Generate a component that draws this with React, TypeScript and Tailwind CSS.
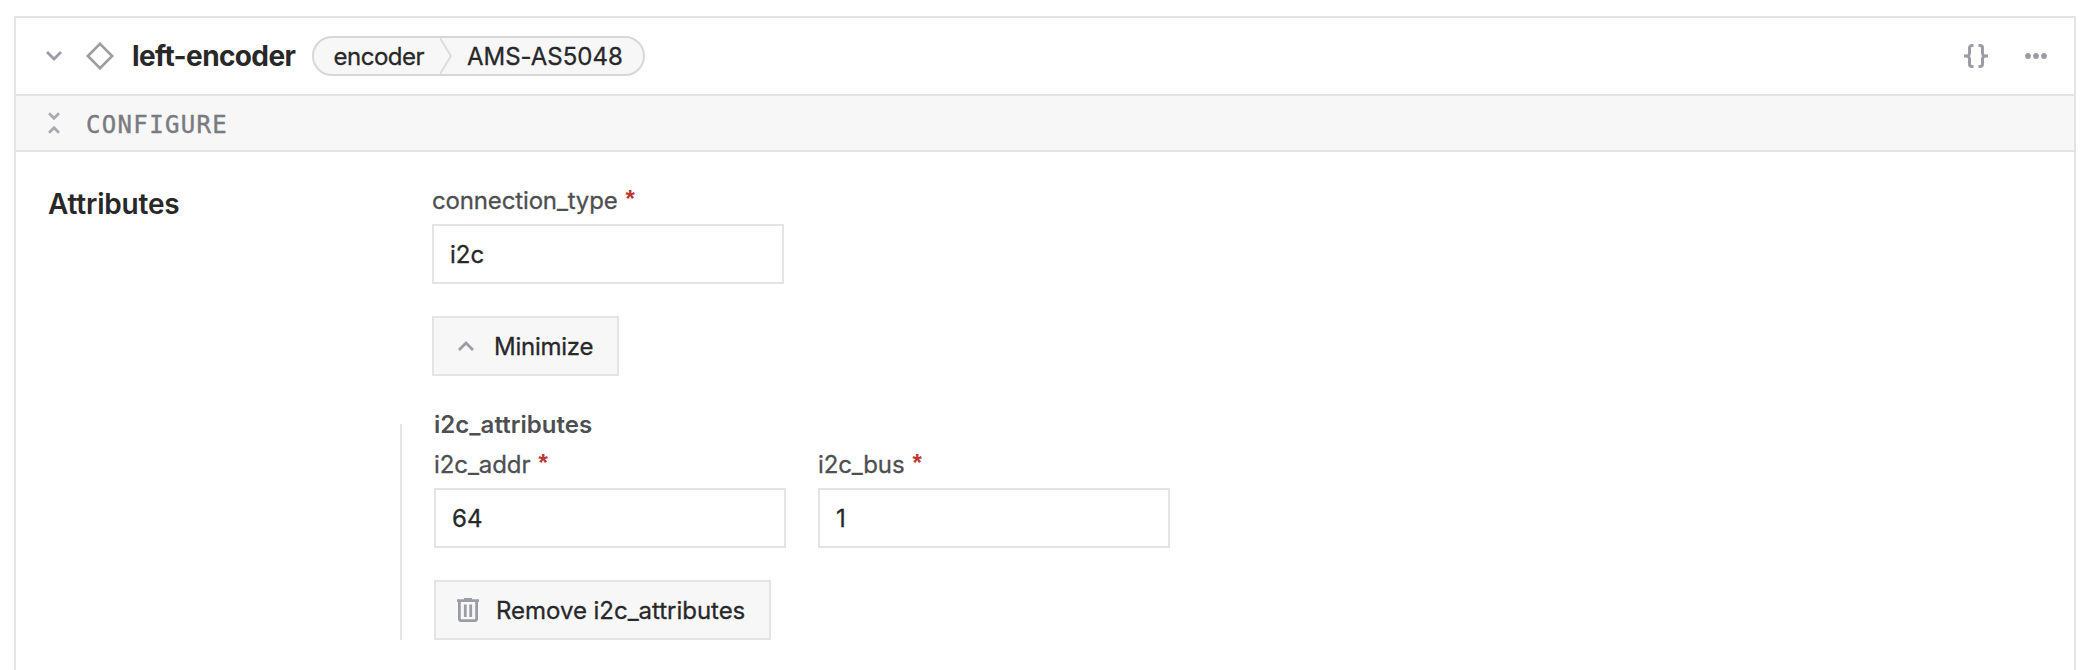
import type { ReactNode } from "react";

function Field({ label, value, tracking }: { label: string; value: string; tracking: string }) {
  return (
    <label className="flex w-[352px] flex-col gap-2">
      <span className="flex h-8 items-center gap-[8px] pt-0.5 leading-[30px] text-[#4e4f52]">
        <span className={`[-webkit-text-stroke:0.3px_#4e4f52] ${tracking}`}>{label}</span>
        <span className="pb-1 font-['Liberation_Sans',sans-serif] font-bold text-[#be3536]">*</span>
      </span>
      <input
        className="h-[60px] w-full border-2 border-[#e4e4e6] bg-white px-4 text-[#282829] outline-none [-webkit-text-stroke:0.3px_#282829]"
        defaultValue={value}
      />
    </label>
  );
}

function Button({ icon, children, className }: { icon: ReactNode; children: ReactNode; className: string }) {
  return (
    <button className={`flex h-[60px] items-center border-2 border-[#e4e4e6] bg-[#f7f7f8] text-[#282829] ${className}`}>
      {icon}
      <span className="pt-0.5 whitespace-nowrap [-webkit-text-stroke:0.3px_#282829]">{children}</span>
    </button>
  );
}

function Chevron({ up = false }: { up?: boolean }) {
  return (
    <svg width="16" height="10" viewBox="0 0 16 10" fill="none" stroke="#9c9ca4" strokeWidth="2.8">
      <path d={up ? "M1 9 8 2l7 7" : "M1 1l7 7 7-7"} />
    </svg>
  );
}

function TrashIcon() {
  return (
    <svg width="22" height="24" viewBox="0 0 22 24" fill="none" stroke="#9c9ca4" strokeWidth="2.8">
      <path d="M0 2.6h22M7 1.4h8" />
      <path d="M2.4 3v18.200a1.400 1.400 0 0 0 1.400 1.400h14.400a1.400 1.400 0 0 0 1.400-1.400V3M8.300 6.500v12.500M13.700 6.500v12.500" />
    </svg>
  );
}

export default function App() {
  return (
    <div className="h-[670px] overflow-hidden bg-white pt-4 pr-[14px] pl-[14px] font-['Inter','Liberation_Sans',sans-serif] text-[24px]">
      <section className="h-[700px] border-2 border-[#e4e4e6]">
        <header className="flex h-[78px] items-center border-b-2 border-[#e4e4e6] pr-[27px] pl-[30px]">
          <Chevron />
          <svg className="ml-6" width="28" height="28" viewBox="0 0 28 28" fill="none" stroke="#9c9ca4" strokeWidth="2.6">
            <path d="M14 1.8 26.2 14 14 26.2 1.8 14z" />
          </svg>
          <h2 className="ml-[18px] w-[180px] text-[28px] font-bold tracking-[-0.62px] whitespace-nowrap text-[#282829]">
            left-encoder
          </h2>
          <div className="flex h-10 w-[333px] items-center rounded-full border-2 border-[#d7d7d9] bg-[#f7f7f8] pl-[19.5px] text-[#282829]">
            <span className="w-[106.5px] pt-px tracking-[-0.5px] [-webkit-text-stroke:0.3px_#282829]">encoder</span>
            <svg width="12" height="36" viewBox="0 0 12 36" fill="none" stroke="#dcdcde" strokeWidth="2">
              <path d="M0 0 11 18 0 36" />
            </svg>
            <span className="ml-[15px] pt-px tracking-[-0.02px] [-webkit-text-stroke:0.3px_#282829]">AMS-AS5048</span>
          </div>
          <svg className="ml-auto" width="24" height="24" viewBox="0 0 24 24" fill="none" stroke="#9c9ca4" strokeWidth="3">
            <path d="M9.5 1.500H8A2.500 2.500 0 0 0 5.500 4v5.200A2.800 2.800 0 0 1 2.700 12H0h2.700a2.800 2.800 0 0 1 2.800 2.800V20A2.500 2.500 0 0 0 8 22.500h1.500M14.500 1.500H16A2.500 2.500 0 0 1 18.500 4v5.200a2.800 2.800 0 0 0 2.800 2.800H24h-2.700a2.800 2.800 0 0 0-2.800 2.800V20a2.500 2.500 0 0 1-2.500 2.500h-1.500" />
          </svg>
          <svg className="ml-[37px]" width="22" height="6" viewBox="0 0 22 6" fill="#9c9ca4">
            <circle cx="3" cy="3" r="2.9" />
            <circle cx="11" cy="3" r="2.9" />
            <circle cx="19" cy="3" r="2.9" />
          </svg>
        </header>

        <div className="flex h-14 items-center border-b-2 border-[#e4e4e6] bg-[#f7f7f8] pl-8">
          <svg width="12" height="22" viewBox="0 0 12 22" fill="none" stroke="#a9a9b0" strokeWidth="2.8">
            <path d="M1 1.2l5 5 5-5M1 20.800l5-5 5 5" />
          </svg>
          <span className="ml-[26px] pt-[3px] font-['DejaVu_Sans_Mono',monospace] tracking-[1.34px] text-[#7a7b80] [-webkit-text-stroke:0.4px_#7a7b80]">
            CONFIGURE
          </span>
        </div>

        <div className="flex pt-8 pl-8">
          <h3 className="w-[384px] text-[28px] leading-10 font-semibold tracking-[-0.2px] text-[#282829]">Attributes</h3>
          <div className="flex flex-col items-start gap-8">
            <Field label="connection_type" value="i2c" tracking="tracking-[-0.15px]" />
            <Button className="w-[187px] gap-5 pl-6 tracking-[-0.25px]" icon={<Chevron up />}>
              Minimize
            </Button>
            <div className="-ml-8 flex">
              <div className="mt-4 w-0.5 bg-[#e4e4e6]" />
              <div className="pl-8">
                <h4 className="mb-2 h-8 pt-0.5 leading-[30px] font-semibold tracking-[0.03px] text-[#4e4f52]">i2c_attributes</h4>
                <div className="flex gap-8">
                  <Field label="i2c_addr" value="64" tracking="tracking-[-0.07px]" />
                  <Field label="i2c_bus" value="1" tracking="tracking-[-0.15px]" />
                </div>
                <Button className="mt-8 w-[337px] gap-[17px] pl-[21px] tracking-[-0.03px]" icon={<TrashIcon />}>
                  Remove i2c_attributes
                </Button>
              </div>
            </div>
          </div>
        </div>
      </section>
    </div>
  );
}
